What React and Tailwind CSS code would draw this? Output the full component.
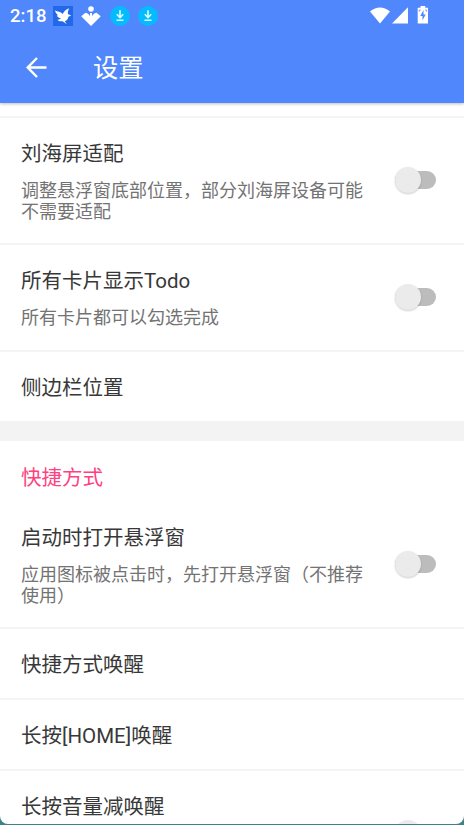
const watermarks = [
  "left-[18px] top-[80px]",
  "left-[312px] top-[80px]",
  "left-[18px] top-[340px]",
  "left-[312px] top-[340px]",
  "left-[18px] top-[597px]",
  "left-[312px] top-[597px]",
];

const DownloadIcon = () => (
  <svg width="20" height="20" viewBox="0 0 20 20">
    <circle cx="10" cy="10" r="10" fill="#06baff" />
    <path
      d="M10 4.200v7M6.800 8.300L10 11.500l3.200-3.200M6.500 14.300h7"
      fill="none"
      stroke="#d9ffff"
      strokeWidth="1.6"
    />
  </svg>
);

const BirdIcon = () => (
  <svg width="20" height="20" viewBox="0 0 20 20">
    <rect width="20" height="20" fill="#2268e8" />
    <path
      d="M2 4.500C4.500 5.600 7.500 5.400 9.800 8C11 5.200 13 3.300 16.200 2.200C15 4.500 14.600 6.500 15 8.300C16.200 8.500 17 9 18.300 10C16.500 9.900 15.600 10.400 15.200 11.500C14.600 13.800 13.400 14.800 11.800 15.200L13.800 18.200L9.600 15.200C7.500 15.600 5.800 15.300 4.300 13.800C6 13.800 7.200 13.200 8 12.300C5.800 11.900 4.400 11 3.700 9.500L5.200 9.200C3.500 8 2.500 6.500 2 4.500z"
      fill="#fff"
    />
  </svg>
);

const PlantIcon = () => (
  <svg width="20" height="20" viewBox="0 0 20 20" fill="#fff">
    <circle cx="10" cy="3" r="2.8" />
    <path d="M4.500 6.800Q7.800 7.200 9 10.500V7h2v3.500Q12.200 7.200 15.500 6.800L19.800 10.300 10 19.900.2 10.300z" />
  </svg>
);

const StatusBar = () => (
  <div className="flex h-8 items-center pl-[10px] pr-[35px]">
    <span className="w-[43px] text-[18.500px] font-medium leading-8">2:18</span>
    <div className="flex items-center">
      <BirdIcon />
      <div className="ml-[8px]">
        <PlantIcon />
      </div>
      <div className="ml-[9px]">
        <DownloadIcon />
      </div>
      <div className="ml-[8px]">
        <DownloadIcon />
      </div>
    </div>
    <div className="ml-auto flex items-center pb-[2px]">
      <svg width="20" height="17" viewBox="0 0 20 17" fill="#fff">
        <path d="M0 4.500Q10-3.300 20 4.500L10 16.500z" />
      </svg>
      <svg className="ml-[2px]" width="16" height="17" viewBox="0 0 16 17" fill="#fff">
        <path d="M16 .3v16.200H0z" />
      </svg>
      <svg className="ml-[9px]" width="12" height="18" viewBox="0 0 12 18">
        <path d="M3.500 0h4.700v1.800H11v15.700H.7V1.800h2.800z" fill="#fff" />
        <path d="M6.500 4L3.300 10h2.200v4.200L8.700 8.500H6.500z" fill="#5086fc" />
        <path d="M2.300 5.500V4h1.300M9.500 5.500V4H8.200" fill="none" stroke="#5086fc" strokeWidth=".8" />
      </svg>
    </div>
  </div>
);

const Switch = () => (
  <div className="mb-[2px] flex h-[26px] w-[41px] shrink-0 items-center">
    <div className="flex h-[18px] w-full items-center rounded-full bg-[#bcbcbc]">
      <div className="size-[26px] shrink-0 rounded-full bg-[#ebebeb] shadow-[0_1px_2px_rgba(0,0,0,0.2)]" />
    </div>
  </div>
);

const Row = ({ title, summary, hasSwitch, height }) => (
  <div className={`flex shrink-0 items-center justify-between pl-[21px] pr-7 ${height}`}>
    <div className="w-[346px] self-start pt-6">
      <div className="text-[20.5px] leading-6 text-[#383838]">{title}</div>
      {summary && (
        <div className="mt-[14px] whitespace-pre-line text-[18px] leading-[21px] text-[#737373]">
          {summary}
        </div>
      )}
    </div>
    {hasSwitch && <Switch />}
  </div>
);

const Divider = () => <div className="h-[2px] shrink-0 bg-[#f4f4f4]" />;

const App = () => {
  return (
    <div className="h-[825px] w-[464px] overflow-hidden bg-[#3f8188] font-[Roboto,'Noto_Sans_CJK_SC',sans-serif]">
      <div className="relative flex h-[824px] flex-col overflow-hidden rounded-b-[8px] bg-white">
        {/* Header */}
        <header className="relative h-[103px] shrink-0 bg-[#5087fc] text-white shadow-[0_1px_3px_rgba(0,0,0,0.25)]">
          <StatusBar />
          <div className="flex h-[70px] items-center pl-[26px]">
            <svg width="21" height="21" viewBox="0 0 21 21" fill="none" stroke="#fff" strokeWidth="2.500">
              <path d="M20.500 10.500H2M11 1L1.700 10.500l9.300 9.500" />
            </svg>
            <h1 className="ml-[46px] pt-[3px] text-[25.300px] leading-8">设置</h1>
          </div>
        </header>

        {/* Settings list */}
        <main className="flex flex-col pt-[13px]">
          <Divider />
          <Row
            title="刘海屏适配"
            summary={"调整悬浮窗底部位置，部分刘海屏设备可能\n不需要适配"}
            hasSwitch
            height="h-[125px]"
          />
          <Divider />
          <Row
            title="所有卡片显示Todo"
            summary="所有卡片都可以勾选完成"
            hasSwitch
            height="h-[105px]"
          />
          <Divider />
          <Row title="侧边栏位置" height="h-[69px]" />
          <div className="h-[20px] shrink-0 bg-[#f3f3f3]" />
          <h2 className="h-[61px] shrink-0 pl-[21px] pt-[25px] text-[20.5px] leading-6 text-[#ff4081]">
            快捷方式
          </h2>
          <Row
            title="启动时打开悬浮窗"
            summary={"应用图标被点击时，先打开悬浮窗（不推荐\n使用）"}
            hasSwitch
            height="h-[125px]"
          />
          <Divider />
          <Row title="快捷方式唤醒" height="h-[69px]" />
          <Divider />
          <Row title="长按[HOME]唤醒" height="h-[69px]" />
          <Divider />
          <Row title="长按音量减唤醒" hasSwitch height="h-[125px]" />
        </main>

        {watermarks.map((pos) => (
          <span
            key={pos}
            className={`pointer-events-none absolute -rotate-[32deg] font-['Open_Sans'] text-[25px] leading-7 text-black/[0.022] ${pos}`}
          >
            mfunz.com
          </span>
        ))}
      </div>
    </div>
  );
};

export default App;
